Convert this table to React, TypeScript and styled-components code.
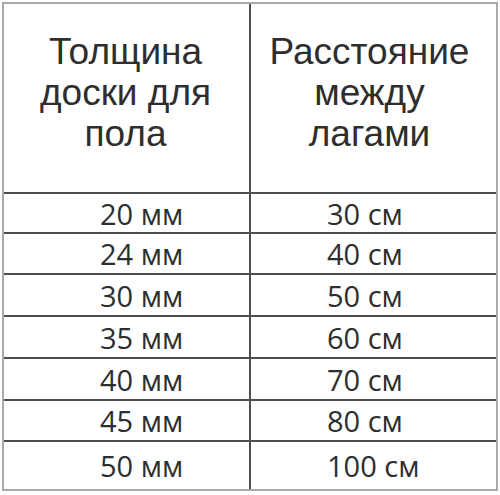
import React from 'react';
import styled, { createGlobalStyle } from 'styled-components';

const rows: [string, string][] = [
  ['20 мм', '30 см'],
  ['24 мм', '40 см'],
  ['30 мм', '50 см'],
  ['35 мм', '60 см'],
  ['40 мм', '70 см'],
  ['45 мм', '80 см'],
  ['50 мм', '100 см'],
];

const GlobalStyle = createGlobalStyle`
  html, body {
    margin: 0;
    padding: 0;
    background: #ffffff;
  }
`;

const Page = styled.div`
  width: 500px;
  height: 495px;
  padding: 2px 0 0 2px;
  box-sizing: border-box;
  background: #ffffff;
`;

const Table = styled.div`
  width: 496px;
  box-sizing: border-box;
  display: grid;
  grid-template-columns: 245px 1fr;
  grid-template-rows: 188px 38px 39px 40px 40px 40px 39px 47px;
  gap: 2px;
  border: 2px solid #a9a9a9;
  background: #4f4f4f;
`;

const HeadCell = styled.div<{ $shift: number }>`
  background: #ffffff;
  padding-top: 27px;
  padding-right: ${(p) => p.$shift}px;
  box-sizing: border-box;
  text-align: center;
  font-family: 'Liberation Sans', Arial, sans-serif;
  font-size: 37px;
  line-height: 41px;
  color: #2e2e2e;
`;

const Cell = styled.div<{ $indent: number }>`
  background: #ffffff;
  display: flex;
  align-items: center;
  padding-left: ${(p) => p.$indent}px;
  font-family: 'Open Sans', 'Liberation Sans', sans-serif;
  font-size: 29px;
  color: #2e2e2e;
  white-space: nowrap;
`;

export default function App() {
  return (
    <>
      <GlobalStyle />
      <Page>
        <Table>
          <HeadCell $shift={2}>
            Толщина
            <br />
            доски для
            <br />
            пола
          </HeadCell>
          <HeadCell $shift={8}>
            Расстояние
            <br />
            между
            <br />
            лагами
          </HeadCell>
          {rows.map(([board, gap]) => (
            <React.Fragment key={board}>
              <Cell $indent={96}>{board}</Cell>
              <Cell $indent={76}>{gap}</Cell>
            </React.Fragment>
          ))}
        </Table>
      </Page>
    </>
  );
}
